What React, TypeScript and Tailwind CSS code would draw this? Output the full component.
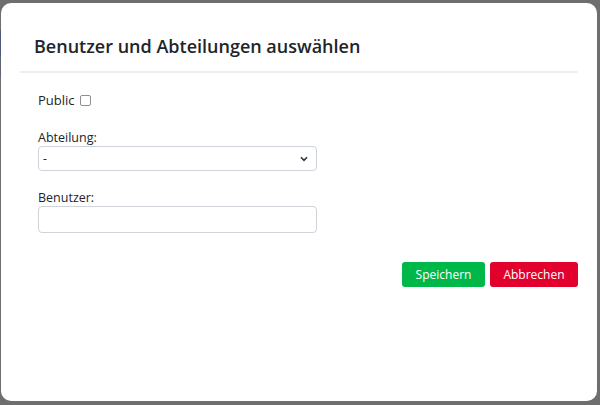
import React from "react";

export default function App() {
  return (
    <div className="w-[600px] h-[405px] bg-[#6e6e6e] flex" style={{ fontFamily: '"Open Sans", "Noto Sans", sans-serif' }}>
      <div className="w-[1px] flex flex-col">
        <div className="h-[30px]" />
        <div className="h-[26px] bg-[#4d5b78]" />
        <div className="h-[20px] bg-[#5e6470]" />
      </div>
      <div className="flex-1 pt-[3px] pr-[3px] pb-[4px] flex">
        <div className="flex-1 bg-white rounded-[10px] pl-[19px] pr-[19px] flex flex-col">
          <div className="h-[70px] border-b-2 border-[#efefef] flex items-end pb-[12px] pl-[14px]">
            <h1 className="text-[18px] font-semibold text-[#212529] leading-[26px]">
              Benutzer und Abteilungen auswählen
            </h1>
          </div>
          <div className="px-[18px] pt-[17px] text-[#212529]">
            <div className="flex items-center gap-[5px] h-[20px]">
              <span className="text-[13px] leading-[20px]">Public</span>
              <span className="w-[11px] h-[11px] border border-[#8f8f8f] rounded-[2px] bg-white" />
            </div>
            <div className="mt-[20px] text-[12.5px] leading-[16px]">Abteilung:</div>
            <div className="w-[279px] h-[25px] border border-[#cfd4da] rounded-[4px] flex items-center justify-between pl-[4px] pr-[8px]">
              <span className="text-[12px]">-</span>
              <svg width="8" height="6" viewBox="0 0 8 6">
                <path d="M1 1.3 L4 4.3 L7 1.3" fill="none" stroke="#333" strokeWidth="1.6" />
              </svg>
            </div>
            <div className="mt-[19px] text-[12.5px] leading-[16px]">Benutzer:</div>
            <div className="w-[279px] h-[27px] border border-[#cfd4da] rounded-[4px]" />
          </div>
          <div className="flex justify-end gap-[5px] mt-[29px]">
            <button className="w-[83px] h-[25px] rounded-[3px] bg-[#00b84a] text-white text-[12px] leading-[25px]">
              Speichern
            </button>
            <button className="w-[88px] h-[25px] rounded-[3px] bg-[#e2002c] text-white text-[12px] leading-[25px]">
              Abbrechen
            </button>
          </div>
        </div>
      </div>
    </div>
  );
}
